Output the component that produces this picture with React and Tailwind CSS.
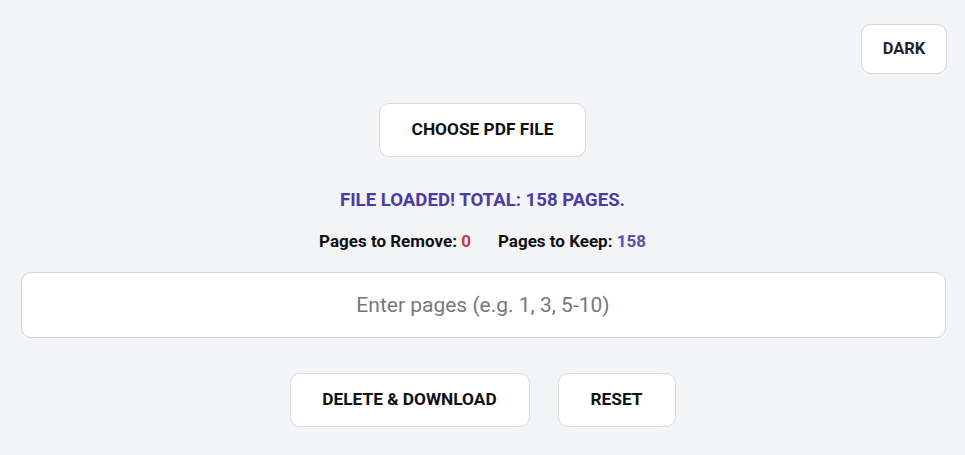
export default function App() {
  return (
    <div className="min-h-screen bg-[#f3f4f6] px-5 pt-6 font-['Roboto',sans-serif]">
      <div className="flex justify-end">
        <button
          type="button"
          className="-mr-[2px] h-[50px] w-[86px] rounded-[10px] border border-[#d6d6dc] bg-white text-[16.5px] font-bold text-[#1f2330]"
        >
          DARK
        </button>
      </div>

      <div className="flex flex-col items-center">
        <button
          type="button"
          className="mt-[29px] h-[54px] w-[207px] rounded-[10px] border border-[#d8d8f0] bg-white text-[17.3px] font-bold text-[#111]"
        >
          CHOOSE PDF FILE
        </button>

        <p className="mt-[30px] text-[18.6px] font-bold leading-[26px] text-[#4a3ba6]">
          FILE LOADED! TOTAL: 158 PAGES.
        </p>

        <div className="mt-[16px] flex gap-[27px] text-[17px] font-bold leading-6 text-[#111]">
          <span>
            Pages to Remove: <span className="text-[#c53a3a]">0</span>
          </span>
          <span>
            Pages to Keep: <span className="text-[#5a4fae]">158</span>
          </span>
        </div>

        <input
          type="text"
          placeholder="Enter pages (e.g. 1, 3, 5-10)"
          className="mt-[19px] ml-[1px] h-[66px] w-full rounded-[10px] border border-[#d4d4d8] bg-white text-center text-[21px] text-[#222] outline-none placeholder:text-[#77777d]"
        />

        <div className="mt-[35px] flex gap-[28px]">
          <button
            type="button"
            className="h-[54px] w-[240px] rounded-[10px] border border-[#d8d8f0] bg-white text-[17.3px] font-bold text-[#111]"
          >
            DELETE &amp; DOWNLOAD
          </button>
          <button
            type="button"
            className="h-[54px] w-[118px] rounded-[10px] border border-[#d8d8f0] bg-white text-[17.3px] font-bold text-[#111]"
          >
            RESET
          </button>
        </div>
      </div>
    </div>
  );
}
